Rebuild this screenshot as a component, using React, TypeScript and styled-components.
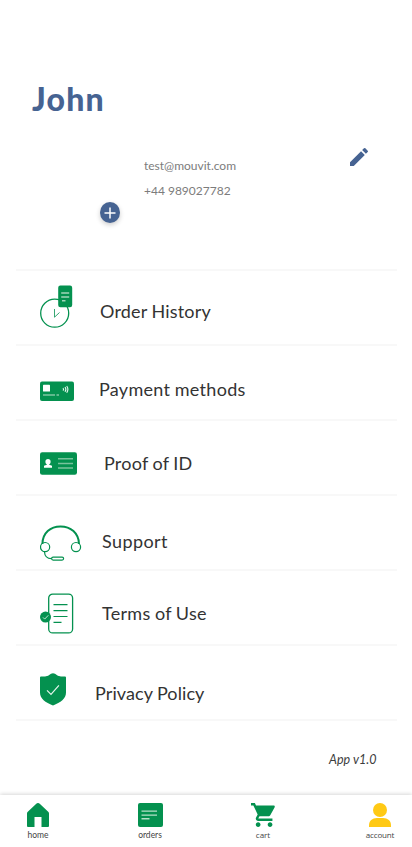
import React from "react";
import styled, { createGlobalStyle } from "styled-components";

const GREEN = "#04914f";
const BLUE = "#466392";

const GlobalStyle = createGlobalStyle`
  *, *::before, *::after { box-sizing: border-box; }
  body { margin: 0; background: #fff; }
  svg { display: block; flex: none; }
`;

const Screen = styled.div`
  width: 412px;
  height: 847px;
  display: flex;
  flex-direction: column;
  overflow: hidden;
  background: #fff;
  font-family: Lato, "Liberation Sans", sans-serif;
`;

const Header = styled.header`
  height: 269px;
  padding: 78px 32px 0;
`;

const Name = styled.h1`
  margin: 0;
  font-size: 32px;
  line-height: 41px;
  font-weight: 900;
  letter-spacing: 1.2px;
  color: ${BLUE};
`;

const Profile = styled.div`
  display: flex;
  align-items: flex-start;
  margin-top: 24px;
`;

const Avatar = styled.div`
  display: flex;
  align-items: flex-end;
  justify-content: flex-end;
  width: 88px;
  height: 80px;
`;

const AddButton = styled.button`
  display: grid;
  place-items: center;
  width: 20px;
  height: 21px;
  padding: 0;
  border: 0;
  border-radius: 50%;
  background: ${BLUE};
  box-shadow: 0 2px 5px rgba(0, 0, 0, 0.2);
`;

const Contact = styled.div`
  display: flex;
  flex-direction: column;
  flex: 1;
  padding: 10px 0 0 24px;
  font-size: 12px;
  line-height: 25px;
  color: #7c7c7c;
`;

const EditButton = styled.button`
  margin: 2px 9px 0 0;
  padding: 0;
  border: 0;
  background: none;
`;

const Menu = styled.nav`
  margin: 0 15px 0 16px;
  border-top: 2px solid #f8f8f8;
`;

const MenuRow = styled.div`
  display: flex;
  align-items: flex-start;
  height: 75px;
  padding-left: 24px;
  border-bottom: 2px solid #f8f8f8;
`;

const IconSlot = styled.div<{ $top: number; $width: number }>`
  width: ${(p) => p.$width}px;
  margin-top: ${(p) => p.$top}px;
`;

const MenuLabel = styled.span<{ $top: number; $spacing: number }>`
  margin-top: ${(p) => p.$top}px;
  font-size: 18px;
  line-height: 24px;
  letter-spacing: ${(p) => p.$spacing}px;
  word-spacing: -0.5px;
  white-space: nowrap;
  color: #333;
`;

const Version = styled.div`
  flex: 1;
  padding: 29px 35.5px 0 0;
  text-align: right;
  font-size: 12.5px;
  line-height: 20px;
  font-style: italic;
  letter-spacing: 0.05px;
  color: #3c3c3c;
`;

const TabBar = styled.nav`
  display: grid;
  grid-template-columns: 112px 113px 117px 40px;
  height: 52px;
  padding: 8px 12px 0 18px;
  background: #fff;
  box-shadow: 0 -1px 4px rgba(0, 0, 0, 0.16);
`;

const Tab = styled.div<{ $font: string; $size: number; $spacing: number }>`
  display: flex;
  flex-direction: column;
  align-items: center;
  width: 40px;
  font-family: ${(p) => p.$font}, sans-serif;
  font-size: ${(p) => p.$size}px;
  letter-spacing: ${(p) => p.$spacing}px;
  line-height: 11px;
  color: #444;
`;

const TabText = styled.span<{ $top: number }>`
  margin-top: ${(p) => p.$top}px;
`;

const HistoryIcon = () => (
  <svg width="33" height="43" viewBox="0 0 33 43" fill="none">
    <circle cx="14.7" cy="28.2" r="14" stroke={GREEN} strokeWidth="1.3" />
    <path d="M14.5 24v8.2l5-4.7" stroke={GREEN} strokeWidth=".8" />
    <rect x="18.2" y=".5" width="14" height="21.8" rx="2.2" fill={GREEN} />
    <path d="M21.2 8h8M21.2 12h8M22 15.7h3.5" stroke="#a0d5b9" strokeWidth="1.4" />
  </svg>
);

const PaymentIcon = () => (
  <svg width="34" height="20" viewBox="0 0 34 20" fill="none">
    <rect y=".5" width="34" height="19.5" rx="2" fill={GREEN} />
    <rect x="3" y="3.7" width="7" height="6.8" rx=".6" fill="#fff" />
    <path d="M3 14h12M16.5 14h2.5" stroke="#b9e2cb" strokeWidth="1.2" />
    <path d="M23 7q1.2 1.3 0 2.7M25 6q1.8 2.2 0 4.8M26.7 5q2.4 3.1 0 6.7" stroke="#e7f6ed" strokeWidth="1.1" />
  </svg>
);

const IdIcon = () => (
  <svg width="37" height="23" viewBox="0 0 37 23">
    <rect y=".3" width="37" height="22.4" rx="2.2" fill={GREEN} />
    <path d="M18 6.7h15M18 11.5h15M18 16h15" stroke="#78c39c" strokeWidth="1.5" />
    <ellipse cx="8" cy="9.7" rx="2.6" ry="2.7" fill="#fff" />
    <path d="M6.8 11h2.4v1.7l2.8 1v2H4v-2l2.8-1z" fill="#fff" />
  </svg>
);

const SupportIcon = () => (
  <svg width="42" height="36" viewBox="0 0 42 36" fill="none" stroke={GREEN}>
    <path d="M2.4 19C2.5 8 10.5 1.4 20.5 1.4S38.8 8 39 19" strokeWidth="2" />
    <circle cx="5.1" cy="22.1" r="4.6" strokeWidth="1.2" />
    <circle cx="36" cy="22.1" r="4.6" strokeWidth="1.2" />
    <path d="M4.5 27c.2 4 2.8 6.5 7 6.7" strokeWidth="1.2" />
    <rect x="11.6" y="32.1" width="12" height="3" rx="1.5" strokeWidth="1.2" />
  </svg>
);

const TermsIcon = () => (
  <svg width="34" height="41" viewBox="0 0 34 41" fill="none">
    <rect x="8.7" y="1.1" width="23.9" height="38.8" rx="4" stroke={GREEN} strokeWidth="1.3" />
    <path d="M13.5 11.7h14M13.5 17.6h14M13.5 23.5h14M13.5 29.4h8" stroke={GREEN} strokeWidth="1.2" />
    <circle cx="5.5" cy="24.1" r="5.5" fill={GREEN} />
    <path d="m3 24.4 1.7 1.7 3.6-3.8" stroke="#d3eedf" strokeWidth=".9" />
  </svg>
);

const ShieldIcon = () => (
  <svg width="26" height="33" viewBox="0 0 26 33" fill="none">
    <path d="M0 4.5q0-1 1-1h4q3.2-.2 6-2.7 2-1.3 4 0 2.8 2.5 6 2.7h4q1 0 1 1v15c0 6.4-5.4 9.7-13 13.1C5.4 29.2 0 25.9 0 19.5z" fill={GREEN} />
    <path d="m7 17.3 4 4 7.9-9" stroke="#e6f5ec" strokeWidth="1.2" />
  </svg>
);

const HomeIcon = () => (
  <svg width="24" height="24" viewBox="0 0 24 24">
    <path d="M1 10.5q0-1 .8-1.7L10 1q2-2 4 0l8.2 7.8q.8.7.8 1.7V23q0 1-1 1h-6.5V14h-7v10H2q-1 0-1-1z" fill={GREEN} />
  </svg>
);

const OrdersIcon = () => (
  <svg width="25" height="24" viewBox="0 0 25 24">
    <rect width="25" height="24" rx="2" fill={GREEN} />
    <path d="M3.5 8.1H19M3.5 12.1H19M3.5 15.8h8" stroke="#b4e0c8" strokeWidth="1.4" />
  </svg>
);

const CartIcon = () => (
  <svg width="25" height="24" viewBox="1 2 21 20" preserveAspectRatio="none">
    <path fill={GREEN} d="M7 18c-1.1 0-1.99.9-1.99 2S5.9 22 7 22s2-.9 2-2-.9-2-2-2zM1 2v2h2l3.6 7.59-1.35 2.45c-.16.28-.25.61-.25.96 0 1.1.9 2 2 2h12v-2H7.42c-.14 0-.25-.11-.25-.25l.03-.12.9-1.63h7.45c.75 0 1.41-.41 1.75-1.03l3.58-6.49c.08-.14.12-.31.12-.48 0-.55-.45-1-1-1H5.21l-.94-2H1zm16 16c-1.1 0-1.99.9-1.99 2s.89 2 1.99 2 2-.9 2-2-.9-2-2-2z" />
  </svg>
);

const AccountIcon = () => (
  <svg width="22" height="24" viewBox="0 0 22 24" fill="#ffc914">
    <circle cx="11" cy="7" r="7" />
    <path d="M0 24v-1.5C0 17.8 3.2 15 8 15h6c4.8 0 8 2.8 8 7.5V24z" />
  </svg>
);

const menuItems = [
  { label: "Order History", icon: <HistoryIcon />, iconTop: 14, slot: 60, textTop: 28, spacing: 0.19 },
  { label: "Payment methods", icon: <PaymentIcon />, iconTop: 35, slot: 59, textTop: 31, spacing: 0.3 },
  { label: "Proof of ID", icon: <IdIcon />, iconTop: 31, slot: 64, textTop: 30, spacing: 0.22 },
  { label: "Support", icon: <SupportIcon />, iconTop: 29, slot: 62, textTop: 33, spacing: 0.4 },
  { label: "Terms of Use", icon: <TermsIcon />, iconTop: 22, slot: 62, textTop: 30, spacing: 0.28 },
  { label: "Privacy Policy", icon: <ShieldIcon />, iconTop: 27, slot: 55, textTop: 35, spacing: 0.1 },
];

const tabs = [
  { label: "home", icon: <HomeIcon />, font: "Lato", size: 8.5, spacing: 0, textTop: 3 },
  { label: "orders", icon: <OrdersIcon />, font: "Lato", size: 8.5, spacing: 0, textTop: 3 },
  { label: "cart", icon: <CartIcon />, font: '"Open Sans"', size: 8, spacing: 0, textTop: 2 },
  { label: "account", icon: <AccountIcon />, font: '"Open Sans"', size: 8, spacing: -0.15, textTop: 2 },
];

export default function App() {
  return (
    <Screen>
      <GlobalStyle />
      <Header>
        <Name>John</Name>
        <Profile>
          <Avatar>
            <AddButton aria-label="Add photo">
              <svg width="12" height="12" viewBox="0 0 12 12" stroke="#fff" strokeWidth="1.5">
                <path d="M6 .5v11M.5 6h11" />
              </svg>
            </AddButton>
          </Avatar>
          <Contact>
            <span>test@mouvit.com</span>
            <span>+44 989027782</span>
          </Contact>
          <EditButton aria-label="Edit">
            <svg width="24" height="24" viewBox="0 0 24 24" fill={BLUE}>
              <path d="M3 17.25V21h3.75L17.81 9.94l-3.75-3.75L3 17.25zM20.71 7.04a1 1 0 0 0 0-1.41l-2.34-2.34a1 1 0 0 0-1.41 0l-1.83 1.83 3.75 3.75 1.83-1.83z" />
            </svg>
          </EditButton>
        </Profile>
      </Header>
      <Menu>
        {menuItems.map((item) => (
          <MenuRow key={item.label}>
            <IconSlot $top={item.iconTop} $width={item.slot}>{item.icon}</IconSlot>
            <MenuLabel $top={item.textTop} $spacing={item.spacing}>{item.label}</MenuLabel>
          </MenuRow>
        ))}
      </Menu>
      <Version>App v1.0</Version>
      <TabBar>
        {tabs.map((tab) => (
          <Tab key={tab.label} $font={tab.font} $size={tab.size} $spacing={tab.spacing}>
            {tab.icon}
            <TabText $top={tab.textTop}>{tab.label}</TabText>
          </Tab>
        ))}
      </TabBar>
    </Screen>
  );
}
